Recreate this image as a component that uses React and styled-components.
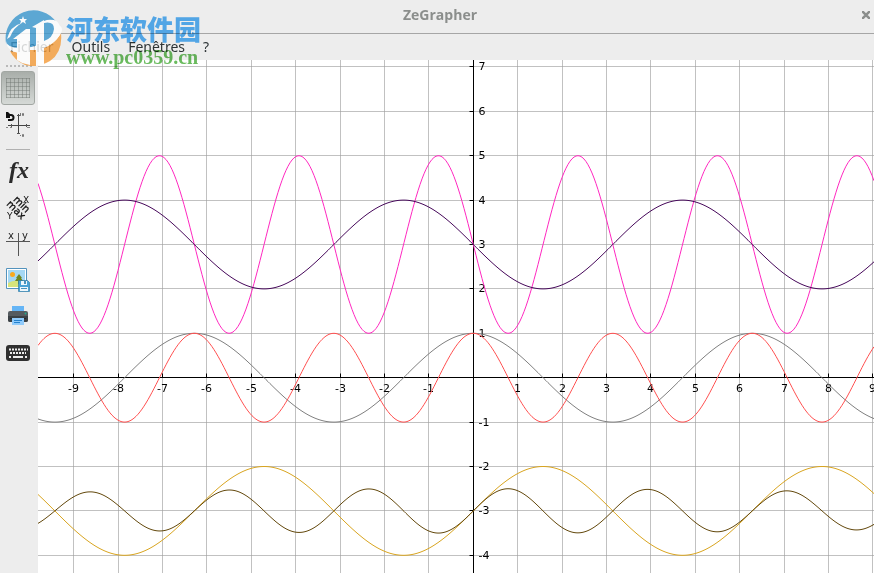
import React from "react";
import styled, { createGlobalStyle } from "styled-components";

const UNIT = 44.4;
const ORIGIN = { x: 435.3, y: 317.7 };
const PLOT = { width: 836, height: 513 };

const curves = [
  { color: "#808080", fn: (x) => Math.cos(x) },
  { color: "#ff5050", fn: (x) => Math.cos(2 * x) },
  { color: "#ff28c0", fn: (x) => 3 - 2 * Math.sin(2 * x) },
  { color: "#46085a", fn: (x) => 3 - Math.sin(x) },
  { color: "#d9a520", fn: (x) => -3 + Math.sin(x) },
  { color: "#63480c", fn: (x) => -3 + 0.5 * Math.cos(x / 16) * Math.sin(2 * x) },
];

const menus = ["Fichier", "Outils", "Fenêtres", "?"];

const xTicks = [-9, -8, -7, -6, -5, -4, -3, -2, -1, 1, 2, 3, 4, 5, 6, 7, 8, 9];
const yTicks = [7, 6, 5, 4, 3, 2, 1, -1, -2, -3, -4];

// lines sit on the middle of a pixel so they stay crisp
const toX = (v) => Math.floor(ORIGIN.x + v * UNIT) + 0.5;
const toY = (v) => Math.floor(ORIGIN.y - v * UNIT) + 0.5;

function curvePath(fn) {
  const points = [];
  for (let px = 0; px <= PLOT.width; px += 2) {
    const y = ORIGIN.y - fn((px - ORIGIN.x) / UNIT) * UNIT;
    points.push(`${px} ${y.toFixed(2)}`);
  }
  return "M" + points.join("L");
}

function Graph() {
  return (
    <Plot
      viewBox={`0 0 ${PLOT.width} ${PLOT.height}`}
      preserveAspectRatio="xMidYMin slice"
      role="img"
      aria-label="Graph"
    >
      <g stroke="#a0a0a0" strokeOpacity="0.65">
        {xTicks.map((v) => (
          <path key={v} d={`M${toX(v)} 0V${PLOT.height}`} />
        ))}
        {yTicks.map((v) => (
          <path key={v} d={`M0 ${toY(v)}H${PLOT.width}`} />
        ))}
      </g>
      <g stroke="#000">
        <path d={`M${toX(0)} 0V${PLOT.height}M0 ${toY(0)}H${PLOT.width}`} />
        {xTicks.map((v) => (
          <path key={v} d={`M${toX(v)} ${toY(0)}v-4`} />
        ))}
        {yTicks.map((v) => (
          <path key={v} d={`M${toX(0)} ${toY(v)}h-4`} />
        ))}
      </g>
      {xTicks.map((v) => (
        <TickLabel key={v} x={toX(v)} y={toY(0) + 14} textAnchor="middle">
          {v}
        </TickLabel>
      ))}
      {yTicks.map((v) => (
        <TickLabel key={v} x={toX(0) + 5} y={toY(v) + 3}>
          {v}
        </TickLabel>
      ))}
      <g fill="none">
        {curves.map((c) => (
          <path key={c.color} d={curvePath(c.fn)} stroke={c.color} />
        ))}
      </g>
    </Plot>
  );
}

function GridIcon() {
  return (
    <svg width="24" height="20" viewBox="0 0 24 20">
      <path
        d="M.5 0v20M4.500 0v20M8.500 0v20M12.500 0v20M16.500 0v20M20.500 0v20M23.500 0v20M0 .5h24M0 4.500h24M0 8.500h24M0 12.500h24M0 16.500h24M0 19.500h24"
        stroke="#6f7571"
        strokeOpacity=".45"
      />
    </svg>
  );
}

function ResetIcon() {
  return (
    <svg width="26" height="28" viewBox="0 0 26 28">
      <path d="M13.500 4v20M3 15.500h22" stroke="#444" />
      <path d="M12 5.500h3M12 23.500h3M6.500 14v3M21.500 14v3" stroke="#555" />
      <path d="M3 5h3a2 2 0 0 1 0 5H3" fill="none" stroke="#111" strokeWidth="2" />
      <path d="M1 2h2l2 2v4H1z" fill="#111" />
      <path d="M15.500 3v3M17.500 3.500h1v2h-1z" fill="none" stroke="#777" />
      <path d="M15 25.500h1M17.500 24.500h1v2h-1z" fill="none" stroke="#777" />
      <path d="M1 17.500h2M5 17.500h2M22 17.500h3" fill="none" stroke="#888" />
    </svg>
  );
}

function FunctionIcon() {
  return (
    <svg width="26" height="28" viewBox="0 0 26 28">
      <text x="4" y="20" fontFamily="Liberation Serif" fontSize="24" fontStyle="italic" fontWeight="bold" fill="#2b2b2b">
        fx
      </text>
    </svg>
  );
}

function RangeIcon() {
  return (
    <svg width="28" height="28" viewBox="0 0 28 28" fontFamily="DejaVu Sans" fill="#111">
      <g fontSize="9">
        <text x="19" y="9">X</text>
        <text x="3" y="25">Y</text>
      </g>
      <g fontSize="10" textAnchor="middle" stroke="#111" strokeWidth=".3" transform="rotate(45 14 14)">
        <text x="14" y="12">min</text>
        <text x="14" y="20">max</text>
      </g>
    </svg>
  );
}

function TableIcon() {
  return (
    <svg width="26" height="28" viewBox="0 0 26 28">
      <path d="M1 11.500h24M13.500 3v23" stroke="#555" />
      <g fontFamily="DejaVu Sans" fontSize="10" fill="#222">
        <text x="3" y="9">x</text>
        <text x="17" y="9">y</text>
      </g>
    </svg>
  );
}

function ImageIcon() {
  return (
    <svg width="24" height="24" viewBox="0 0 24 24">
      <path d="M.5.5h20v20H.5z" fill="#fff" stroke="#5393bd" />
      <path d="M2 2h17v17H2z" fill="#a5d8f4" />
      <path d="M2 15q8-5 17 0v4H2z" fill="#d6e47c" />
      <circle cx="6.500" cy="6.500" r="2.500" fill="#f9a91e" />
      <path d="M13 6l-3 4h1l-2 3h3v3h2v-3h3l-2-3h1z" fill="#6f8520" />
      <path d="M12.500 12.500h9l2 2v9h-11z" fill="#4ba3d6" stroke="#27749f" strokeWidth=".6" />
      <path d="M15 13h6v4h-6zM14 19h8v4h-8z" fill="#eef7fc" />
      <path d="M18 13h2v3h-2zM15 20h6v1h-6z" fill="#4b93bc" />
    </svg>
  );
}

function PrinterIcon() {
  return (
    <svg width="20" height="20" viewBox="0 0 20 20">
      <path d="M4 0h12v7H4z" fill="#65b5f6" />
      <rect y="5" width="20" height="11" rx="2" fill="#555b5f" />
      <path d="M0 10h20v4a2 2 0 0 1-2 2H2a2 2 0 0 1-2-2z" fill="#3b4145" />
      <path d="M2 12h16v1H2z" fill="#25292c" />
      <circle cx="17.500" cy="7.500" r="1" fill="#22aa8c" />
      <path d="M4 12h12v7H4z" fill="#90cbfb" />
      <path d="M6 14.500h8M6 16.500h6" stroke="#2481cd" />
    </svg>
  );
}

function KeyboardIcon() {
  return (
    <svg width="24" height="16" viewBox="0 0 24 16">
      <rect width="24" height="16" rx="3" fill="#303030" />
      <path d="M3 4.500h19M4 8h16" stroke="#eee" strokeWidth="2" strokeDasharray="2 1" />
      <path d="M3 12h2M7 12h10M19 12h2" stroke="#eee" strokeWidth="2" />
    </svg>
  );
}

function Logo() {
  return (
    <LogoSvg width="60" height="58" viewBox="0 0 60 58">
      <path d="M1 33A28 28 0 0 1 52 13Q58 22 44 30Q26 40 9 39Q3 37 1 33z" fill="#3996cd" />
      <path d="M5 41Q24 46 42 36Q53 29 56 23Q58 42 45 51Q33 58 20 55Q9 50 5 41z" fill="#f49b38" />
      <path d="M1 31q1 7 14 7q22 0 36-14q6-7-2-11q12 3 6 12q-10 15-34 18q-19 1-20-12z" fill="#fff" />
      <path d="M8 29l13-10h4v36l-4-1q-5-1-9-4V29zM27 17l12-7v45l-8 1V18z" fill="#fff" />
      <path d="M25 40h6v16h-6z" fill="#f49b38" />
      <path d="M39 13q10-2 10 6q-1 9-10 12v5q14-3 16-14q1-10-6-12q-6-1-10 1z" fill="#fff" />
      <path d="M2 29q3-13 15-16q-8 4-12 14z" fill="#fff" />
      <path d="M18 6l1 3h3l-2 2 1 3-3-2-3 2 1-3-2-2h3z" fill="#fff" />
    </LogoSvg>
  );
}

const tools = [
  { name: "Reset view", icon: ResetIcon, height: 38 },
  { name: "separator" },
  { name: "Functions", icon: FunctionIcon, height: 36 },
  { name: "Range", icon: RangeIcon, height: 36 },
  { name: "Values table", icon: TableIcon, height: 36 },
  { name: "Export image", icon: ImageIcon, height: 36 },
  { name: "Print", icon: PrinterIcon, height: 36 },
  { name: "Keyboard", icon: KeyboardIcon, height: 38 },
];

function App() {
  return (
    <Window>
      <GlobalStyle />
      <TitleBar>
        <Title>ZeGrapher</Title>
        <CloseButton aria-label="Close">
          <svg width="8" height="8" viewBox="0 0 8 8">
            <path d="M0 0l8 8M8 0L0 8" stroke="#8b8e8c" strokeWidth="2.500" />
          </svg>
        </CloseButton>
      </TitleBar>
      <MenuBar>
        {menus.map((menu) => (
          <MenuButton key={menu}>{menu}</MenuButton>
        ))}
      </MenuBar>
      <Content>
        <Toolbar>
          <Handle />
          <ToolButton $active $height={34} aria-label="Grid">
            <GridIcon />
          </ToolButton>
          {tools.map(({ name, icon: Icon, height }) =>
            Icon ? (
              <ToolButton key={name} $height={height} aria-label={name}>
                <Icon />
              </ToolButton>
            ) : (
              <Separator key={name} />
            )
          )}
        </Toolbar>
        <Graph />
      </Content>
      <LogoMark>
        <Logo />
      </LogoMark>
      <SiteMark>
        <SiteName>河东软件园</SiteName>
        <SiteUrl>www.pc0359.cn</SiteUrl>
      </SiteMark>
    </Window>
  );
}

const GlobalStyle = createGlobalStyle`
  body {
    margin: 0;
    background: #ededed;
  }
`;

const Window = styled.div`
  position: relative;
  display: flex;
  flex-direction: column;
  height: 100vh;
  overflow: hidden;
  background: #ededed;
  font-family: "Noto Sans", "Open Sans", sans-serif;
`;

const TitleBar = styled.header`
  display: grid;
  grid-template-columns: 1fr auto 1fr;
  align-items: center;
  height: 34px;
  padding: 0 4px 3px 10px;
  box-sizing: border-box;
  border-bottom: 1px solid #a6a6a6;
  flex-shrink: 0;
`;

const Title = styled.h1`
  grid-column: 2;
  margin: 0;
  font-family: "Open Sans", sans-serif;
  font-size: 14px;
  font-weight: 700;
  line-height: 20px;
  color: #8b8e8c;
`;

const CloseButton = styled.button`
  justify-self: end;
  display: flex;
  padding: 0;
  border: 0;
  background: none;
`;

const MenuBar = styled.nav`
  display: flex;
  gap: 18px;
  height: 26px;
  padding: 0 10px;
  flex-shrink: 0;
`;

const MenuButton = styled.button`
  padding: 0;
  border: 0;
  background: none;
  font-family: inherit;
  font-size: 14px;
  line-height: 26px;
  color: #2e3436;
`;

const Content = styled.main`
  display: flex;
  flex: 1;
  min-height: 0;
`;

const Toolbar = styled.aside`
  width: 38px;
  flex-shrink: 0;
  display: flex;
  flex-direction: column;
  align-items: center;
`;

const Handle = styled.div`
  width: 26px;
  margin: 5px 0 4px;
  border-top: 2px dotted #b9b9b9;
`;

const ToolButton = styled.button`
  display: flex;
  align-items: center;
  justify-content: center;
  width: 34px;
  height: ${(props) => props.$height}px;
  margin-right: 2px;
  padding: 0;
  box-sizing: border-box;
  border: ${(props) => (props.$active ? "1px solid #a2a7a3" : "0")};
  border-radius: 3px;
  background: ${(props) =>
    props.$active ? "linear-gradient(#a9aeaa, #d5d9d6)" : "none"};

  svg {
    overflow: visible;
  }
`;

const Separator = styled.hr`
  width: 24px;
  margin: 6px 2px 4px 0;
  border: 0;
  border-top: 1px solid #b0b0b0;
`;

const Plot = styled.svg`
  display: block;
  flex: 1;
  min-width: 0;
  height: 100%;
  background: #fff;
`;

const TickLabel = styled.text`
  font-family: "DejaVu Sans", sans-serif;
  font-size: 11px;
  fill: #000;
`;

const LogoMark = styled.div`
  position: absolute;
  top: 10px;
  left: 5px;
  opacity: 0.8;
  pointer-events: none;
`;

const SiteMark = styled.div`
  position: absolute;
  top: 10px;
  left: 66px;
  mix-blend-mode: multiply;
  pointer-events: none;
`;

const LogoSvg = styled.svg`
  display: block;
`;

const SiteName = styled.div`
  font-family: "Noto Sans CJK SC", sans-serif;
  font-size: 27px;
  font-weight: 900;
  line-height: 38px;
  color: #58b2f7;
`;

const SiteUrl = styled.div`
  font-family: "Liberation Serif", serif;
  font-size: 20px;
  font-weight: bold;
  line-height: 18px;
  color: #6abb5e;
`;

export default App;
